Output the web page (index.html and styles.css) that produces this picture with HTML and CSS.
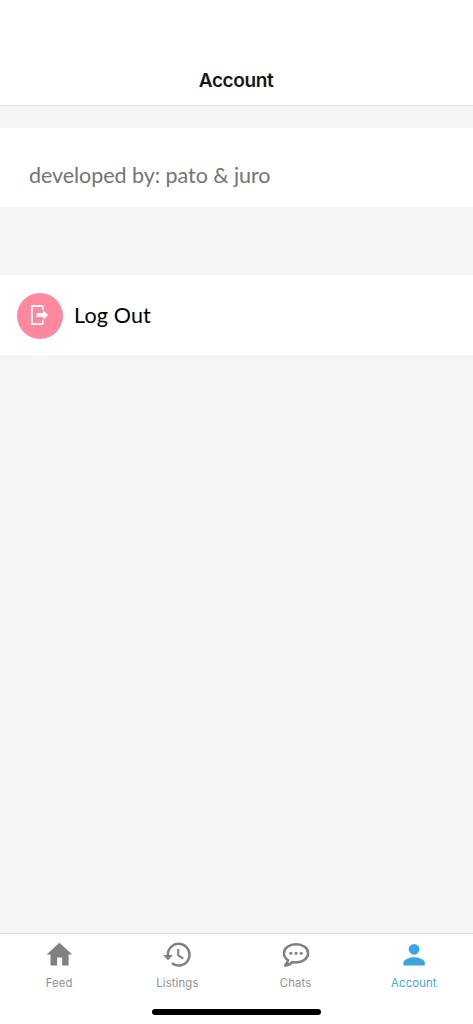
FILE: index.html
```html
<!DOCTYPE html>
<html lang="en">
<head>
<meta charset="utf-8">
<title>Account</title>
<link rel="stylesheet" href="styles.css">
</head>
<body>
<div class="screen">
  <header class="header"><h1 class="title">Account</h1></header>
  <main class="content">
    <section class="row credit"><span class="credit-text">developed by: pato &amp; juro</span></section>
    <section class="row logout">
      <span class="badge">
        <svg width="46" height="46" viewBox="0 0 46 46"><path d="M26 17v-2.500q0-1.500-1.500-1.500H14.900v18.200h9.600q1.500 0 1.500-1.500v-2.500" fill="none" stroke="#fff" stroke-width="1.800" stroke-linejoin="round"/><path d="M19.500 20h6.500v-3.100l5 5.100-5 5.100v-3.100h-6.500z" fill="#fff"/></svg>
      </span>
      <span class="logout-text">Log Out</span>
    </section>
  </main>
  <nav class="tabs">
    <a class="tab">
      <svg width="30" height="30" viewBox="0 0 30 30"><path d="M15.400 2.800 28.200 14.500h-3.600V25.500h-6.500v-8h-5v8H6.500V14.500H2.600z" fill="currentColor"/></svg>
      <span class="label">Feed</span>
    </a>
    <a class="tab">
      <svg width="30" height="30" viewBox="0 0 30 30"><path d="M5.900 15.500A10.800 10.800 0 1 1 9.900 23.100" fill="none" stroke="currentColor" stroke-width="2.500"/><path d="M1.200 15h9.700l-4.900 5.300z" fill="currentColor"/><path d="M16.200 9v6.300l5 3.300" fill="none" stroke="currentColor" stroke-width="2.100"/></svg>
      <span class="label">Listings</span>
    </a>
    <a class="tab">
      <svg width="30" height="30" viewBox="0 0 30 30"><path d="M15.100 4.200C8.200 4.200 3 8.100 3 13.200c0 2.900 1.600 5.300 4 6.900-.2 2.200-1.500 4-3 5.400 3.100-.1 5.500-1.200 7.300-3.400 1.100.2 2.300.3 3.800.3 6.700 0 12-4 12-9.200s-5.300-9-12-9z" fill="none" stroke="currentColor" stroke-width="2.500" stroke-linejoin="round"/><g fill="currentColor"><circle cx="9.800" cy="13.300" r="1.500"/><circle cx="15" cy="13.300" r="1.500"/><circle cx="20.200" cy="13.300" r="1.500"/></g></svg>
      <span class="label">Chats</span>
    </a>
    <a class="tab active">
      <svg width="30" height="30" viewBox="0 0 30 30"><circle cx="15.100" cy="9.300" r="5.400" fill="currentColor"/><path d="M4.400 25.500v-2.700c0-3.600 7.100-5.500 10.700-5.500s10.700 1.900 10.700 5.500v2.700z" fill="currentColor"/></svg>
      <span class="label">Account</span>
    </a>
  </nav>
  <footer class="home-area"><div class="home-bar"></div></footer>
</div>
</body>
</html>
```
FILE: styles.css
```css
* { box-sizing: border-box; }
body { margin: 0; background: #f6f5f3; }
.screen { width: 473px; height: 1024px; display: flex; flex-direction: column; }
.header { height: 106px; padding: 69px 1px 0 0; background: #fff; border-bottom: 1px solid #e3e3e3; text-align: center; }
.title { margin: 0; font: 600 19px/24px Inter, sans-serif; letter-spacing: -0.4px; color: #151517; }
.content { flex: 1; padding-top: 22px; }
.row { display: flex; background: #fff; font-family: Lato, sans-serif; }
.credit { height: 79px; padding: 34px 29px 0; }
.credit-text { font-size: 21.5px; line-height: 26px; font-weight: 400; letter-spacing: -0.05px; color: #747474; white-space: nowrap; }
.logout { height: 80px; margin-top: 68px; padding: 1px 0 0 17px; align-items: center; gap: 11px; }
.badge { width: 46px; height: 46px; border-radius: 50%; background: #ff889f; }
.badge svg { display: block; }
.logout-text { font-size: 21.5px; line-height: 26px; margin-top: -2px; color: #000; font-weight: 400; letter-spacing: 0.15px; white-space: nowrap; }
.tabs { display: flex; height: 67px; padding-top: 6px; background: #fff; border-top: 1px solid #dfdfdf; }
.tab { flex: 1; display: flex; flex-direction: column; align-items: center; color: #808080; }
.tab svg { display: block; }
.label { margin-top: 5px; font: 400 11.3px/16px Inter, sans-serif; letter-spacing: 0.15px; color: #929292; }
.active, .active .label { color: #3ba5e2; }
.home-area { height: 24px; padding-top: 9px; background: #fff; }
.home-bar { width: 169px; height: 6px; margin: 0 auto; border-radius: 3px; background: #000; }
```
